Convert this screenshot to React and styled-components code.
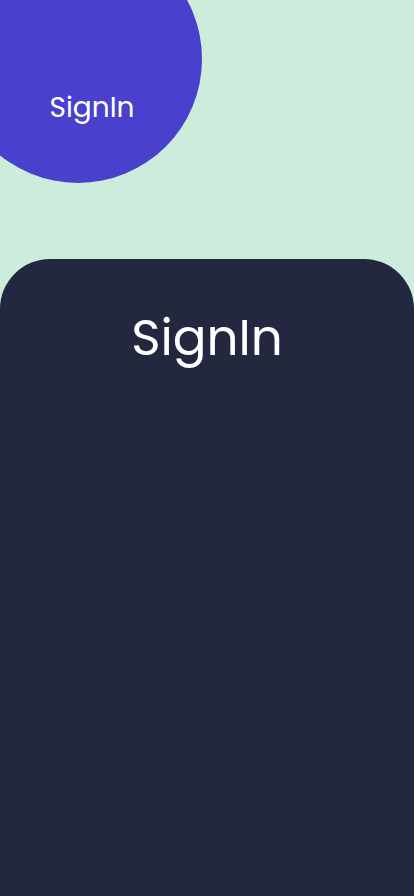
import React from "react";
import styled, { createGlobalStyle } from "styled-components";

const GlobalStyle = createGlobalStyle`
  html, body {
    margin: 0;
    padding: 0;
    height: 100%;
  }
  body {
    font-family: "Poppins", "Open Sans", "Noto Sans", sans-serif;
    background: #cdeddc;
    overflow: hidden;
  }
  #root {
    height: 100%;
  }
`;

const Page = styled.div`
  position: relative;
  display: flex;
  flex-direction: column;
  height: 100vh;
  background: #cdeddc;
  overflow: hidden;
`;

const Header = styled.div`
  position: relative;
  height: 259px;
  flex-shrink: 0;
`;

const Blob = styled.div`
  position: absolute;
  top: -65px;
  left: -46px;
  width: 248px;
  height: 248px;
  border-radius: 50%;
  background: #4940cd;
  display: flex;
  align-items: center;
  justify-content: center;
`;

const BlobLabel = styled.span`
  margin: 98px 0 0 28px;
  color: #ffffff;
  font-size: 28px;
  font-weight: 400;
`;

const Card = styled.div`
  flex: 1;
  display: flex;
  flex-direction: column;
  align-items: center;
  background: #232740;
  border-radius: 50px 50px 0 0;
`;

const Title = styled.h1`
  margin: 47px 0 0;
  color: #ffffff;
  font-size: 50px;
  font-weight: 400;
  line-height: 64px;
`;

export default function App() {
  return (
    <Page>
      <GlobalStyle />
      <Header>
        <Blob>
          <BlobLabel>SignIn</BlobLabel>
        </Blob>
      </Header>
      <Card>
        <Title>SignIn</Title>
      </Card>
    </Page>
  );
}
